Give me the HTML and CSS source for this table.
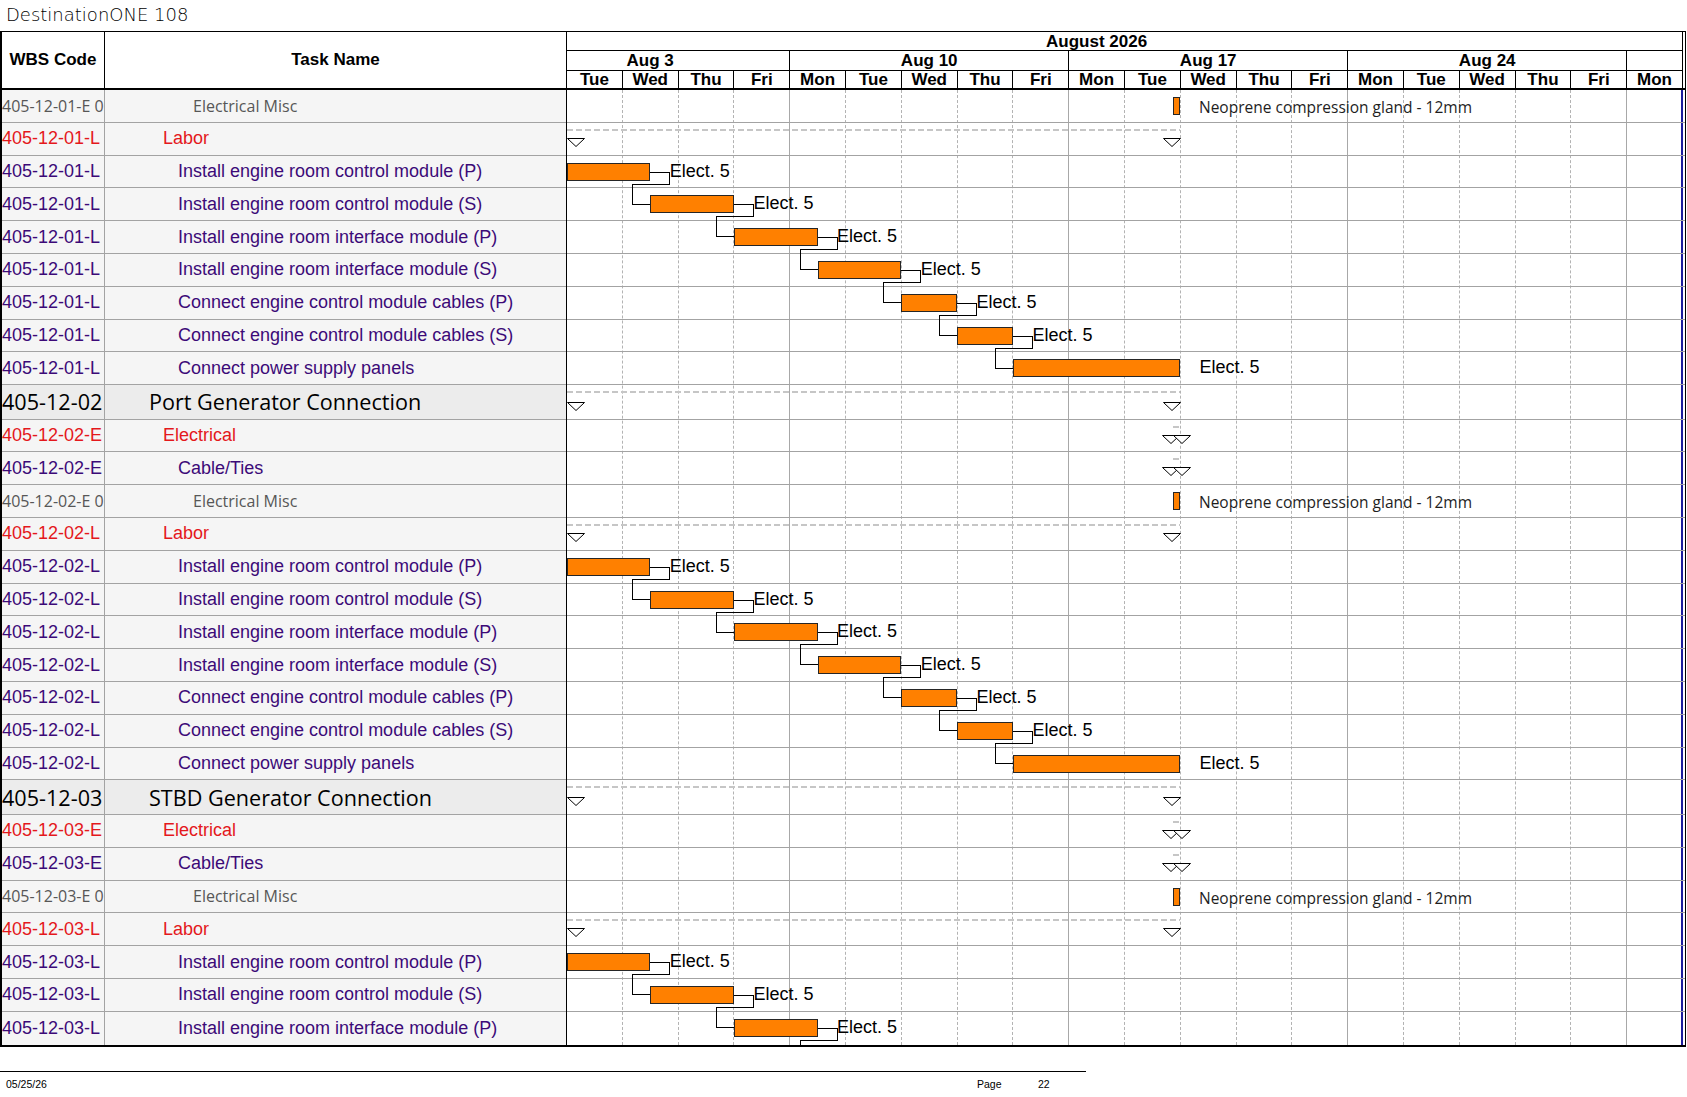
FILE: index.html
```html
<!DOCTYPE html>
<html>
<head>
<meta charset="utf-8">
<title>DestinationONE 108</title>
<link rel="stylesheet" href="styles.css">
</head>
<body>
<div class="page">
  <div class="title">DestinationONE 108</div>
  <div class="sheet">
    <div class="table">
      <div class="thead">
        <div class="th wbs">WBS Code</div>
        <div class="th name">Task Name</div>
      </div>
      <div class="tbody">
        <div class="r trow misc"><div class="wbs">405-12-01-E 0</div><div class="name">Electrical Misc</div></div>
        <div class="r trow grp"><div class="wbs">405-12-01-L</div><div class="name">Labor</div></div>
        <div class="r trow task"><div class="wbs">405-12-01-L</div><div class="name">Install engine room control module (P)</div></div>
        <div class="r trow task"><div class="wbs">405-12-01-L</div><div class="name">Install engine room control module (S)</div></div>
        <div class="r trow task"><div class="wbs">405-12-01-L</div><div class="name">Install engine room interface module (P)</div></div>
        <div class="r trow task"><div class="wbs">405-12-01-L</div><div class="name">Install engine room interface module (S)</div></div>
        <div class="r trow task"><div class="wbs">405-12-01-L</div><div class="name">Connect engine control module cables (P)</div></div>
        <div class="r trow task"><div class="wbs">405-12-01-L</div><div class="name">Connect engine control module cables (S)</div></div>
        <div class="r trow task"><div class="wbs">405-12-01-L</div><div class="name">Connect power supply panels</div></div>

        <div class="r big trow sum"><div class="wbs">405-12-02</div><div class="name">Port Generator Connection</div></div>
        <div class="r trow grp"><div class="wbs">405-12-02-E</div><div class="name">Electrical</div></div>
        <div class="r trow task"><div class="wbs">405-12-02-E</div><div class="name">Cable/Ties</div></div>
        <div class="r trow misc"><div class="wbs">405-12-02-E 0</div><div class="name">Electrical Misc</div></div>
        <div class="r trow grp"><div class="wbs">405-12-02-L</div><div class="name">Labor</div></div>
        <div class="r trow task"><div class="wbs">405-12-02-L</div><div class="name">Install engine room control module (P)</div></div>
        <div class="r trow task"><div class="wbs">405-12-02-L</div><div class="name">Install engine room control module (S)</div></div>
        <div class="r trow task"><div class="wbs">405-12-02-L</div><div class="name">Install engine room interface module (P)</div></div>
        <div class="r trow task"><div class="wbs">405-12-02-L</div><div class="name">Install engine room interface module (S)</div></div>
        <div class="r trow task"><div class="wbs">405-12-02-L</div><div class="name">Connect engine control module cables (P)</div></div>
        <div class="r trow task"><div class="wbs">405-12-02-L</div><div class="name">Connect engine control module cables (S)</div></div>
        <div class="r trow task"><div class="wbs">405-12-02-L</div><div class="name">Connect power supply panels</div></div>

        <div class="r big trow sum"><div class="wbs">405-12-03</div><div class="name">STBD Generator Connection</div></div>
        <div class="r trow grp"><div class="wbs">405-12-03-E</div><div class="name">Electrical</div></div>
        <div class="r trow task"><div class="wbs">405-12-03-E</div><div class="name">Cable/Ties</div></div>
        <div class="r trow misc"><div class="wbs">405-12-03-E 0</div><div class="name">Electrical Misc</div></div>
        <div class="r trow grp"><div class="wbs">405-12-03-L</div><div class="name">Labor</div></div>
        <div class="r trow task"><div class="wbs">405-12-03-L</div><div class="name">Install engine room control module (P)</div></div>
        <div class="r trow task"><div class="wbs">405-12-03-L</div><div class="name">Install engine room control module (S)</div></div>
        <div class="r trow task last"><div class="wbs">405-12-03-L</div><div class="name">Install engine room interface module (P)</div></div>
      </div>
    </div>

    <div class="gantt">
      <div class="ghead">
        <div class="hclip">
          <div class="tl">
            <div class="hrow month"><div class="hc m">August 2026</div></div>
            <div class="hrow week">
              <div class="hc w5">Aug 3</div>
              <div class="hc w5">Aug 10</div>
              <div class="hc w5">Aug 17</div>
              <div class="hc w5">Aug 24</div>
              <div class="hc d"></div>
            </div>
            <div class="hrow day">
              <div class="hc d"></div><div class="hc d">Tue</div><div class="hc d">Wed</div><div class="hc d">Thu</div><div class="hc d">Fri</div>
              <div class="hc d">Mon</div><div class="hc d">Tue</div><div class="hc d">Wed</div><div class="hc d">Thu</div><div class="hc d">Fri</div>
              <div class="hc d">Mon</div><div class="hc d">Tue</div><div class="hc d">Wed</div><div class="hc d">Thu</div><div class="hc d">Fri</div>
              <div class="hc d">Mon</div><div class="hc d">Tue</div><div class="hc d">Wed</div><div class="hc d">Thu</div><div class="hc d">Fri</div>
              <div class="hc d">Mon</div>
            </div>
          </div>
        </div>
      </div>
      <div class="gbody">
        <div class="grid">
          <div class="gc"></div><div class="gc"></div><div class="gc"></div><div class="gc wk"></div>
          <div class="gc"></div><div class="gc"></div><div class="gc"></div><div class="gc"></div><div class="gc wk"></div>
          <div class="gc"></div><div class="gc"></div><div class="gc"></div><div class="gc"></div><div class="gc wk"></div>
          <div class="gc"></div><div class="gc"></div><div class="gc"></div><div class="gc"></div><div class="gc wk"></div>
          <div class="gc end"></div>
        </div>

        <div class="r grow"><div class="bar" style="left:605.5px;width:7.8px"></div><span class="note" style="left:632px">Neoprene compression gland - 12mm</span></div>
        <div class="r grow"><div class="sl" style="left:0;width:613.3px"></div>
          <svg class="tri" style="left:0" width="18" height="10" viewBox="0 0 18 10"><path d="M0.5 0.5H17.5L9 8.5Z"/></svg>
          <svg class="tri" style="left:596.3px" width="18" height="10" viewBox="0 0 18 10"><path d="M0.5 0.5H17.5L9 8.5Z"/></svg></div>
        <div class="r grow"><svg class="link" width="700" height="70"><path d="M83 16.5H102.5V28.5H65.5V48.5H83"/></svg><div class="bar" style="left:0;width:83.2px"></div><span class="lbl" style="left:102.7px">Elect. 5</span></div>
        <div class="r grow"><svg class="link" width="700" height="70"><path d="M167 16.5H186.5V28.5H149.5V48.5H167"/></svg><div class="bar" style="left:83.2px;width:83.7px"></div><span class="lbl" style="left:186.4px">Elect. 5</span></div>
        <div class="r grow"><svg class="link" width="700" height="70"><path d="M250.5 16.5H270.5V28.5H233.5V48.5H250.5"/></svg><div class="bar" style="left:166.9px;width:83.7px"></div><span class="lbl" style="left:270.1px">Elect. 5</span></div>
        <div class="r grow"><svg class="link" width="700" height="70"><path d="M334 16.5H353.5V28.5H316.5V48.5H334"/></svg><div class="bar" style="left:250.6px;width:83.7px"></div><span class="lbl" style="left:353.8px">Elect. 5</span></div>
        <div class="r grow"><svg class="link" width="700" height="70"><path d="M390 16.5H409.5V28.5H372.5V48.5H390"/></svg><div class="bar" style="left:334.3px;width:55.8px"></div><span class="lbl" style="left:409.6px">Elect. 5</span></div>
        <div class="r grow"><svg class="link" width="700" height="70"><path d="M446 16.5H465.5V28.5H428.5V48.5H446"/></svg><div class="bar" style="left:390.1px;width:55.8px"></div><span class="lbl" style="left:465.4px">Elect. 5</span></div>
        <div class="r grow"><div class="bar" style="left:445.9px;width:167.4px"></div><span class="lbl" style="left:632.5px">Elect. 5</span></div>

        <div class="r big grow"><div class="sl" style="left:0;width:613.3px"></div>
          <svg class="tri" style="left:0" width="18" height="10" viewBox="0 0 18 10"><path d="M0.5 0.5H17.5L9 8.5Z"/></svg>
          <svg class="tri" style="left:596.3px" width="18" height="10" viewBox="0 0 18 10"><path d="M0.5 0.5H17.5L9 8.5Z"/></svg></div>
        <div class="r grow"><div class="sl" style="left:606px;width:7px"></div>
          <svg class="tri" style="left:595px" width="18" height="10" viewBox="0 0 18 10"><path d="M0.5 0.5H17.5L9 8.5Z"/></svg>
          <svg class="tri" style="left:606px" width="18" height="10" viewBox="0 0 18 10"><path d="M0.5 0.5H17.5L9 8.5Z"/></svg></div>
        <div class="r grow"><div class="sl" style="left:606px;width:7px"></div>
          <svg class="tri" style="left:595px" width="18" height="10" viewBox="0 0 18 10"><path d="M0.5 0.5H17.5L9 8.5Z"/></svg>
          <svg class="tri" style="left:606px" width="18" height="10" viewBox="0 0 18 10"><path d="M0.5 0.5H17.5L9 8.5Z"/></svg></div>
        <div class="r grow"><div class="bar" style="left:605.5px;width:7.8px"></div><span class="note" style="left:632px">Neoprene compression gland - 12mm</span></div>
        <div class="r grow"><div class="sl" style="left:0;width:613.3px"></div>
          <svg class="tri" style="left:0" width="18" height="10" viewBox="0 0 18 10"><path d="M0.5 0.5H17.5L9 8.5Z"/></svg>
          <svg class="tri" style="left:596.3px" width="18" height="10" viewBox="0 0 18 10"><path d="M0.5 0.5H17.5L9 8.5Z"/></svg></div>
        <div class="r grow"><svg class="link" width="700" height="70"><path d="M83 16.5H102.5V28.5H65.5V48.5H83"/></svg><div class="bar" style="left:0;width:83.2px"></div><span class="lbl" style="left:102.7px">Elect. 5</span></div>
        <div class="r grow"><svg class="link" width="700" height="70"><path d="M167 16.5H186.5V28.5H149.5V48.5H167"/></svg><div class="bar" style="left:83.2px;width:83.7px"></div><span class="lbl" style="left:186.4px">Elect. 5</span></div>
        <div class="r grow"><svg class="link" width="700" height="70"><path d="M250.5 16.5H270.5V28.5H233.5V48.5H250.5"/></svg><div class="bar" style="left:166.9px;width:83.7px"></div><span class="lbl" style="left:270.1px">Elect. 5</span></div>
        <div class="r grow"><svg class="link" width="700" height="70"><path d="M334 16.5H353.5V28.5H316.5V48.5H334"/></svg><div class="bar" style="left:250.6px;width:83.7px"></div><span class="lbl" style="left:353.8px">Elect. 5</span></div>
        <div class="r grow"><svg class="link" width="700" height="70"><path d="M390 16.5H409.5V28.5H372.5V48.5H390"/></svg><div class="bar" style="left:334.3px;width:55.8px"></div><span class="lbl" style="left:409.6px">Elect. 5</span></div>
        <div class="r grow"><svg class="link" width="700" height="70"><path d="M446 16.5H465.5V28.5H428.5V48.5H446"/></svg><div class="bar" style="left:390.1px;width:55.8px"></div><span class="lbl" style="left:465.4px">Elect. 5</span></div>
        <div class="r grow"><div class="bar" style="left:445.9px;width:167.4px"></div><span class="lbl" style="left:632.5px">Elect. 5</span></div>

        <div class="r big grow"><div class="sl" style="left:0;width:613.3px"></div>
          <svg class="tri" style="left:0" width="18" height="10" viewBox="0 0 18 10"><path d="M0.5 0.5H17.5L9 8.5Z"/></svg>
          <svg class="tri" style="left:596.3px" width="18" height="10" viewBox="0 0 18 10"><path d="M0.5 0.5H17.5L9 8.5Z"/></svg></div>
        <div class="r grow"><div class="sl" style="left:606px;width:7px"></div>
          <svg class="tri" style="left:595px" width="18" height="10" viewBox="0 0 18 10"><path d="M0.5 0.5H17.5L9 8.5Z"/></svg>
          <svg class="tri" style="left:606px" width="18" height="10" viewBox="0 0 18 10"><path d="M0.5 0.5H17.5L9 8.5Z"/></svg></div>
        <div class="r grow"><div class="sl" style="left:606px;width:7px"></div>
          <svg class="tri" style="left:595px" width="18" height="10" viewBox="0 0 18 10"><path d="M0.5 0.5H17.5L9 8.5Z"/></svg>
          <svg class="tri" style="left:606px" width="18" height="10" viewBox="0 0 18 10"><path d="M0.5 0.5H17.5L9 8.5Z"/></svg></div>
        <div class="r grow"><div class="bar" style="left:605.5px;width:7.8px"></div><span class="note" style="left:632px">Neoprene compression gland - 12mm</span></div>
        <div class="r grow"><div class="sl" style="left:0;width:613.3px"></div>
          <svg class="tri" style="left:0" width="18" height="10" viewBox="0 0 18 10"><path d="M0.5 0.5H17.5L9 8.5Z"/></svg>
          <svg class="tri" style="left:596.3px" width="18" height="10" viewBox="0 0 18 10"><path d="M0.5 0.5H17.5L9 8.5Z"/></svg></div>
        <div class="r grow"><svg class="link" width="700" height="70"><path d="M83 16.5H102.5V28.5H65.5V48.5H83"/></svg><div class="bar" style="left:0;width:83.2px"></div><span class="lbl" style="left:102.7px">Elect. 5</span></div>
        <div class="r grow"><svg class="link" width="700" height="70"><path d="M167 16.5H186.5V28.5H149.5V48.5H167"/></svg><div class="bar" style="left:83.2px;width:83.7px"></div><span class="lbl" style="left:186.4px">Elect. 5</span></div>
        <div class="r grow last"><svg class="link" width="700" height="70"><path d="M250.5 16.5H270.5V28.5H233.5V48.5H250.5"/></svg><div class="bar" style="left:166.9px;width:83.7px"></div><span class="lbl" style="left:270.1px">Elect. 5</span></div>
      </div>
    </div>
  </div>
  <div class="footer">
    <span class="fdate">05/25/26</span>
    <span class="fpage">Page</span>
    <span class="fnum">22</span>
  </div>
</div>
</body>
</html>
```

FILE: styles.css
```css
* { box-sizing: border-box; }

body {
  margin: 0;
  background: #fff;
  color: #000;
  font-family: "Liberation Sans", Arial, sans-serif;
}

.page {
  width: 1687px;
  height: 1097px;
  overflow: hidden;
}

.title {
  height: 31px;
  padding-left: 6px;
  font-family: "DejaVu Sans", sans-serif;
  font-weight: 200;
  font-size: 18px;
  line-height: 30px;
  color: #000;
}

.sheet {
  display: flex;
  width: 1686px;
  border-top: 1px solid #000;
  border-left: 2px solid #000;
  border-right: 1px solid #000;
  border-bottom: 2px solid #000;
}

.table {
  width: 564px;
  flex: none;
}

.thead {
  display: flex;
  height: 58px;
  border-bottom: 2px solid #000;
}

.th {
  display: flex;
  align-items: center;
  justify-content: center;
  font-weight: bold;
  font-size: 17px;
}

.th.wbs {
  width: 103px;
  border-right: 1px solid #000;
}

.th.name { flex: 1; }

.r {
  height: 32.8px;
  border-bottom: 1px solid #a3a3a3;
}

.r.big { height: 34.5px; }

.r.last { border-bottom: none; }

.trow {
  display: flex;
  background: #f5f5f5;
  font-size: 18px;
}

.trow .wbs {
  width: 103px;
  flex: none;
  border-right: 1px solid #a3a3a3;
  display: flex;
  align-items: center;
  white-space: nowrap;
  overflow: hidden;
}

.trow .name {
  flex: 1;
  display: flex;
  align-items: center;
  white-space: nowrap;
  overflow: hidden;
}

.grp { color: #e4181c; }
.grp .name { padding-left: 58px; }

.task { color: #3c0a78; }
.task .name { padding-left: 73px; }

.misc {
  color: #575757;
  font-family: "Open Sans", sans-serif;
  font-size: 16px;
}
.misc .name { padding-left: 88px; }

.sum {
  background: #ececec;
  color: #000;
  font-family: "Open Sans", sans-serif;
  font-size: 21.6px;
}
.sum .name { padding-left: 44px; }

.gantt {
  width: 1119px;
  flex: none;
  border-left: 1px solid #000;
}

.ghead {
  height: 58px;
  border-bottom: 2px solid #000;
}

.hclip {
  width: 1116px;
  height: 56px;
  overflow: hidden;
}

.tl {
  margin-left: -55.8px;
  width: 1171.8px;
}

.hrow {
  display: flex;
  font-weight: bold;
  font-size: 17px;
}

.hrow.month {
  height: 19px;
  border-bottom: 1px solid #000;
}

.hrow.week {
  height: 20px;
  border-bottom: 1px solid #000;
}

.hrow.day { height: 17px; }

.hc {
  flex: none;
  display: flex;
  align-items: center;
  justify-content: center;
  border-right: 1px solid #000;
  white-space: nowrap;
  overflow: hidden;
  line-height: 1;
}

.hc.m { width: 1171.8px; }
.hc.w5 { width: 279px; }
.hc.d { width: 55.8px; }

.gbody {
  position: relative;
  overflow: hidden;
}

.grid {
  position: absolute;
  top: 0;
  left: 0;
  bottom: 0;
  display: flex;
  z-index: 0;
}

.gc {
  width: 55.8px;
  flex: none;
  border-right: 1px dashed #b3b3b3;
}

.gc.wk { border-right: 1px solid #a8a8a8; }
.gc.end { border-right: 2px solid #1d1d9c; }

.grow {
  position: relative;
  z-index: 1;
}

.bar {
  position: absolute;
  top: 7px;
  height: 18px;
  background: #ff8000;
  border: 1px solid #262626;
}

.lbl {
  position: absolute;
  top: 6px;
  font-size: 18px;
  line-height: 18px;
  white-space: nowrap;
}

.note {
  position: absolute;
  top: 1px;
  font-family: "Open Sans", sans-serif;
  font-size: 15.5px;
  line-height: 32px;
  color: #1e1e1e;
  white-space: nowrap;
}

.sl {
  position: absolute;
  top: 6px;
  height: 2px;
  background: repeating-linear-gradient(90deg, #c6c6c6 0 6px, transparent 6px 9px);
}

.tri {
  position: absolute;
  top: 15px;
  overflow: visible;
}

.big .tri { top: 17px; }

.tri path {
  fill: #fff;
  stroke: #000;
  stroke-width: 1;
}

.link {
  position: absolute;
  left: 0;
  top: 0;
  overflow: visible;
  pointer-events: none;
}

.link path {
  fill: none;
  stroke: #000;
  stroke-width: 1;
  shape-rendering: crispEdges;
}

.footer {
  width: 1086px;
  margin-top: 24px;
  border-top: 1px solid #000;
  display: flex;
  padding-top: 6px;
  font-size: 10.5px;
  line-height: 12px;
}

.fdate {
  width: 977px;
  padding-left: 6px;
}

.fpage { width: 61px; }
```
